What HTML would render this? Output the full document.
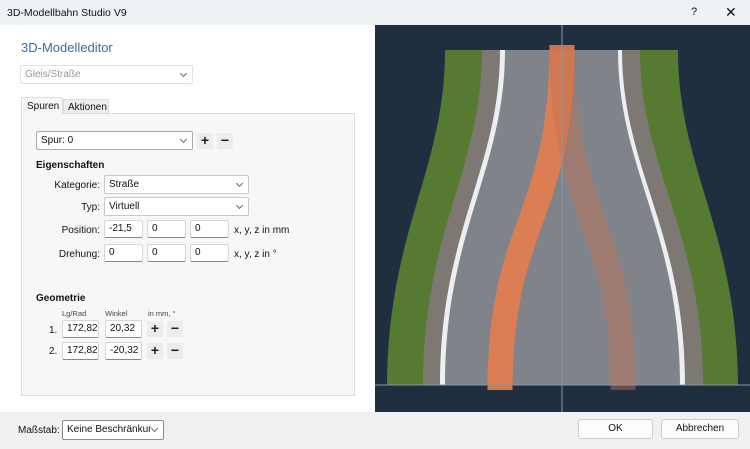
<!DOCTYPE html>
<html><head><meta charset="utf-8"><style>
*{box-sizing:border-box;margin:0;padding:0}
body{width:750px;height:449px;overflow:hidden;background:#fff;font-family:"Liberation Sans",sans-serif;font-size:10px;color:#111;position:relative}
.a{position:absolute}
.inp{position:absolute;background:#fff;border:1px solid #d6d6d6;border-bottom:1px solid #888;height:18px;padding:0 4px;line-height:16px;font-size:10px;border-radius:2px}
.sel{position:absolute;background:#fff;border:1px solid #c8c8c8;height:19px;padding:0 4px;line-height:17px;font-size:10px;border-radius:2px}
.sel:after{content:"";position:absolute;right:6px;top:5px;width:4px;height:4px;border-right:1px solid #666;border-bottom:1px solid #666;transform:rotate(45deg)}
.btn{position:absolute;background:#ececec;width:16px;height:16px;text-align:center;font-size:14px;line-height:15px;font-weight:bold;color:#222}
.lbl{position:absolute;text-align:right;font-size:10px}
</style></head><body>
<div class="a" style="left:0;top:0;width:750px;height:25px;background:#eff2f5"></div>
<div class="a" style="left:7px;top:7px;font-size:10.5px">3D-Modellbahn Studio V9</div>
<div class="a" style="left:691px;top:6px;font-size:11px">?</div>
<div class="a" style="left:725px;top:4px;font-size:14px">✕</div>

<div class="a" style="left:21px;top:40px;font-size:13px;color:#3c6e9b">3D-Modelleditor</div>
<div class="sel" style="left:20px;top:65px;width:173px;color:#999;border-color:#e2e2e2">Gleis/Straße</div>

<div class="a" style="left:21px;top:113px;width:334px;height:283px;background:#f7f7f7;border:1px solid #ddd"></div>
<div class="a" style="left:21px;top:97px;width:42px;height:17px;background:#f7f7f7;border:1px solid #ddd;border-bottom:none;padding:3px 5px;font-size:10px">Spuren</div>
<div class="a" style="left:63px;top:99px;width:46px;height:15px;background:#eee;border:1px solid #ddd;padding:2px 4px;font-size:10px">Aktionen</div>

<div class="sel" style="left:36px;top:131px;width:157px;height:19px;border-color:#aaa">Spur: 0</div>
<div class="btn" style="left:197px;top:133px">+</div>
<div class="btn" style="left:217px;top:133px">−</div>
<div class="a" style="left:36px;top:160px;font-weight:bold;font-size:10px">Eigenschaften</div>
<div class="lbl" style="left:40px;top:180px;width:60px">Kategorie:</div>
<div class="sel" style="left:104px;top:175px;width:145px">Straße</div>
<div class="lbl" style="left:40px;top:202px;width:60px">Typ:</div>
<div class="sel" style="left:104px;top:197px;width:145px">Virtuell</div>
<div class="lbl" style="left:40px;top:225px;width:60px">Position:</div>
<div class="inp" style="left:104px;top:220px;width:39px">-21,5</div>
<div class="inp" style="left:147px;top:220px;width:39px">0</div>
<div class="inp" style="left:190px;top:220px;width:39px">0</div>
<div class="a" style="left:234px;top:225px">x, y, z in mm</div>
<div class="lbl" style="left:40px;top:249px;width:60px">Drehung:</div>
<div class="inp" style="left:104px;top:244px;width:39px">0</div>
<div class="inp" style="left:147px;top:244px;width:39px">0</div>
<div class="inp" style="left:190px;top:244px;width:39px">0</div>
<div class="a" style="left:234px;top:249px">x, y, z in °</div>

<div class="a" style="left:36px;top:293px;font-weight:bold">Geometrie</div>
<div class="a" style="left:62px;top:309px;font-size:7.5px;color:#444">Lg/Rad</div>
<div class="a" style="left:105px;top:309px;font-size:7.5px;color:#444">Winkel</div>
<div class="a" style="left:148px;top:309px;font-size:7.5px;color:#444">in mm, °</div>
<div class="a" style="left:49px;top:325px">1.</div>
<div class="inp" style="left:62px;top:320px;width:37px">172,82</div>
<div class="inp" style="left:105px;top:320px;width:37px">20,32</div>
<div class="btn" style="left:147px;top:321px">+</div>
<div class="btn" style="left:167px;top:321px">−</div>
<div class="a" style="left:49px;top:346px">2.</div>
<div class="inp" style="left:62px;top:342px;width:37px">172,82</div>
<div class="inp" style="left:105px;top:342px;width:37px">-20,32</div>
<div class="btn" style="left:147px;top:343px">+</div>
<div class="btn" style="left:167px;top:343px">−</div>

<svg class="a" style="left:375px;top:25px" width="375" height="387" viewBox="375 25 375 387">
<rect x="375" y="25" width="375" height="387" fill="#1f2f3f"/>
<path d="M445 50 C445 170 388 230 387 385 L738 385 C737 230 678 170 678 50 Z" fill="#577a32"/>
<path d="M482 50 C482 170 423 230 423 385 L703 385 C703 230 640 170 640 50 Z" fill="#7d7872"/>
<path d="M500 50 C500 170 440 230 440 385 L685 385 C685 230 622 170 622 50 Z" fill="#eceff1"/>
<path d="M505 50 C505 170 445 230 445 385 L680 385 C680 230 618 170 618 50 Z" fill="#80848a"/>
<path d="M562 45 C562 220 500 220 500 390" stroke="#e07d50" stroke-width="25" fill="none" opacity="0.95"/>
<path d="M562 45 C562 220 623 220 623 390" stroke="#c07050" stroke-width="25" fill="none" opacity="0.45"/>
<line x1="562" y1="25" x2="562" y2="412" stroke="#8a98a6" stroke-width="1"/>
<line x1="375" y1="385" x2="750" y2="385" stroke="#8a98a6" stroke-width="1"/>
</svg>

<div class="a" style="left:0;top:412px;width:750px;height:37px;background:#f0f0f0"></div>
<div class="a" style="left:18px;top:425px">Maßstab:</div>
<div class="sel" style="left:62px;top:420px;width:102px;height:20px;border-color:#888;white-space:nowrap;overflow:hidden;padding-right:14px;line-height:18px"><span style="display:inline-block;width:84px;overflow:hidden">Keine Beschränkung</span></div>
<div class="a" style="left:578px;top:419px;width:75px;height:20px;background:#fdfdfd;border:1px solid #ccc;border-radius:3px;text-align:center;line-height:18px">OK</div>
<div class="a" style="left:661px;top:419px;width:78px;height:20px;background:#fdfdfd;border:1px solid #ccc;border-radius:3px;text-align:center;line-height:18px">Abbrechen</div>
</body></html>
